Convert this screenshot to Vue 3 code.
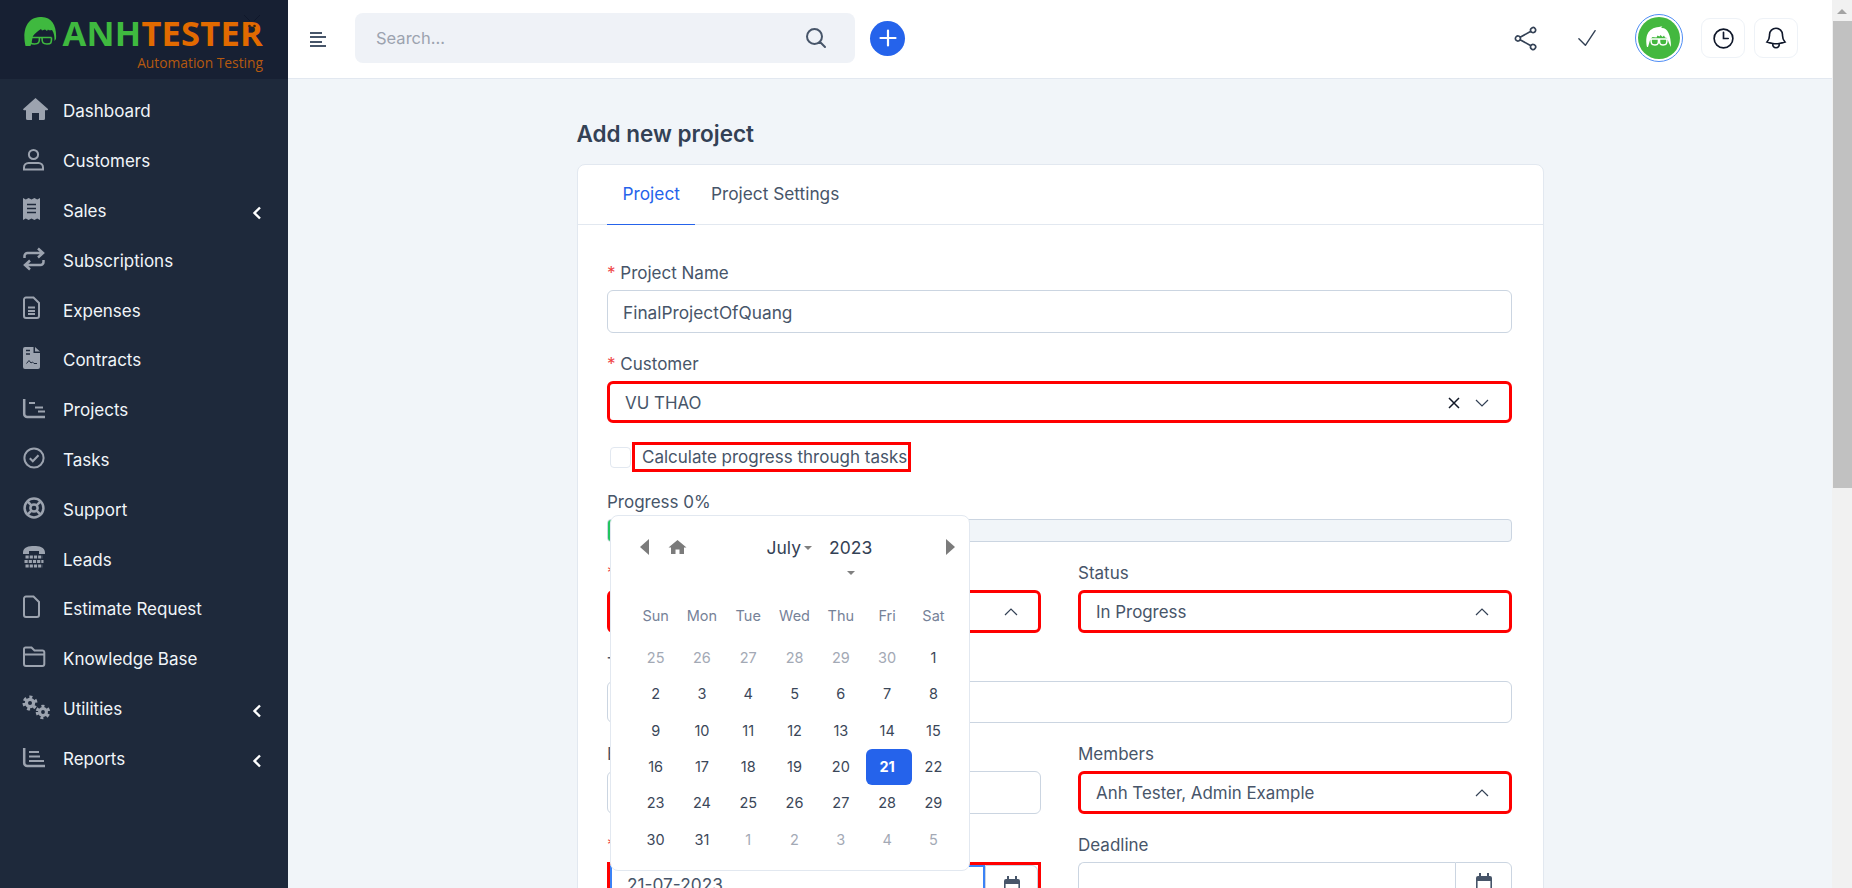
<script setup>
const circle = (cx, cy, r) => `M${cx - r} ${cy}a${r} ${r} 0 1 0 ${r * 2} 0a${r} ${r} 0 1 0 ${-r * 2} 0z`;

const axis = 'M1.2 3V18a3 3 0 0 0 3 3H22';

const menu = [
  { label: 'Dashboard', icon: [['fill', 'M12.5 1 25 12q.5 1-.8 1.2H22v8.3q0 1.5-1.5 1.5H16v-7H9v7H4.5Q3 23 3 21.5v-8.3H1Q-.3 13 .2 12z']] },
  { label: 'Customers', icon: [['line', circle(10.5, 7.5, 4.6)], ['line', 'M1 22.5v-2a4.5 4.5 0 0 1 4.5-4.5h10a4.5 4.5 0 0 1 4.5 4.5v2z']] },
  {
    label: 'Sales',
    more: true,
    icon: [
      ['fill', 'M0 1l2.8 1.5L5.6 1l2.9 1.5L11.4 1l2.8 1.5L17 1v22l-2.8-1.5-2.8 1.5-2.9-1.5L5.6 23l-2.8-1.5L0 23z'],
      ['cut', 'M4 7.5h9M4 11.5h9M4 15.500h9'],
    ],
  },
  { label: 'Subscriptions', icon: [['wide', 'M1.500 11V9a3 3 0 0 1 3-3H19M15 1.500l5 4.500-5 4.500M20.500 13v2a3 3 0 0 1-3 3H3M7 13.500 2 18l5 4.500']] },
  { label: 'Expenses', icon: [['line', 'M3 1.500h7.500L16 7v13a2 2 0 0 1-2 2H3a2 2 0 0 1-2-2V3.500a2 2 0 0 1 2-2z'], ['mid', 'M5 11.500h7M5 15h7M5 18h7']] },
  {
    label: 'Contracts',
    icon: [
      ['fill', 'M2 1h8.500v6H17v14a2 2 0 0 1-2 2H2a2 2 0 0 1-2-2V3a2 2 0 0 1 2-2zM12 1l5 4.500h-5z'],
      ['cut', 'M3 4.500h4M3 8h4'],
      ['cutThin', 'M3.500 17.500l2.500-3 2 2.500 1.500-1 1.500 1.500h3'],
    ],
  },
  { label: 'Projects', icon: [['wide', axis], ['mid', 'M6 7h6M12 11.500h8M15 15.500h7']] },
  { label: 'Tasks', icon: [['line', circle(11, 12, 9.600)], ['line', 'M6.800 12.200l3 3 5.700-6']] },
  { label: 'Support', icon: [['wide', circle(11, 12, 9.400)], ['wide', circle(11, 12, 3.600)], ['wide', 'M4.200 5.200l4.200 4.200M17.800 5.200l-4.200 4.200M4.200 18.800l4.200-4.200M17.800 18.800l-4.200-4.200']] },
  {
    label: 'Leads',
    icon: [
      ['fill', 'M0 7.500C0 2 6 1 11 1s11 1 11 6.500V9h-6V6H6v3H0z'],
      ['keys', 'M2.500 12h17M1.500 16.500h19M2.500 21h17'],
    ],
  },
  { label: 'Estimate Request', icon: [['line', 'M3 1.500h7.500L16 7v13a2 2 0 0 1-2 2H3a2 2 0 0 1-2-2V3.500a2 2 0 0 1 2-2z']] },
  { label: 'Knowledge Base', icon: [['line', 'M1 8V4a1.500 1.500 0 0 1 1.500-1.500h6l3 3h8A1.800 1.800 0 0 1 21.300 7.300V19a2 2 0 0 1-2 2H3a2 2 0 0 1-2-2zM1 9.500h20.300']] },
  {
    label: 'Utilities',
    more: true,
    icon: [
      ['fill', circle(7, 8, 5.200)],
      ['teeth', circle(7, 8, 6)],
      ['cutFill', circle(7, 8, 2)],
      ['fill', circle(20, 17, 5)],
      ['teeth', circle(20, 17, 5.800)],
      ['cutFill', circle(20, 17, 1.900)],
    ],
  },
  { label: 'Reports', more: true, icon: [['wide', axis], ['mid', 'M6 7h10M6 11.500h11M6 16h15']] },
];

const weekDays = ['Sun', 'Mon', 'Tue', 'Wed', 'Thu', 'Fri', 'Sat'];

const calendarDays = [
  ...[25, 26, 27, 28, 29, 30].map((day) => ({ day, muted: true })),
  ...Array.from({ length: 31 }, (_, i) => ({ day: i + 1, muted: false })),
  ...[1, 2, 3, 4, 5].map((day) => ({ day, muted: true })),
];
</script>

<template>
  <div class="page">
    <aside class="sidebar">
      <div class="logo">
        <svg class="logoFace" width="33" height="31" viewBox="0 0 33 31">
          <path class="hair" d="M1.500 29C-1 19-.5 1 16 0c12-.5 17 9 16 22l-1.500 2c0-5-.5-8-2.500-11-2 .5-3 .5-4-.5l-1 1.500-2-1.500-3 1-1-1.500c-3 2-6 4-8 7-1 3-1 7-2.500 10z" />
          <path class="specs" d="M5.500 20.500h22M6 20.500c0 6 .5 6.500 4.500 6.500s5-1 5-6.500M18 20.500c0 5.500 1 6.500 5 6.500s4.500-.5 4.500-6.500" />
        </svg>
        <div class="logoText">
          <div class="logoName"><span class="anh">ANH</span><span class="tester">TESTER</span></div>
          <div class="logoSub">Automation Testing</div>
        </div>
        <svg class="bug" width="20" height="18" viewBox="0 0 20 18">
          <path d="M2 0l6 6M18 0l-6 6" stroke="#0f172a" stroke-width="1" fill="none" />
          <circle cx="7.500" cy="11" r="1.300" fill="#3d2208" />
          <circle cx="12.500" cy="11" r="1.300" fill="#3d2208" />
        </svg>
      </div>
      <nav class="menu">
        <div v-for="item in menu" :key="item.label" class="menuItem">
          <svg class="menuIcon" width="28" height="24" viewBox="0 0 28 24">
            <path v-for="(part, i) in item.icon" :key="i" :class="part[0]" :d="part[1]" />
          </svg>
          <span class="menuLabel">{{ item.label }}</span>
          <svg v-if="item.more" class="menuMore" width="10" height="14" viewBox="0 0 10 14">
            <path d="M8 1.500 2.500 7 8 12.500" />
          </svg>
        </div>
      </nav>
    </aside>

    <div class="main">
      <header class="topbar">
        <div class="burger"><i></i><i></i><i></i><i></i></div>
        <div class="search">
          <span>Search...</span>
          <svg width="24" height="24" viewBox="0 0 24 24" fill="none" stroke="#475569" stroke-width="2">
            <path d="m21 21-5.197-5.197m0 0A7.5 7.500 0 1 0 5.196 5.196a7.500 7.500 0 0 0 10.607 10.607Z" stroke-linecap="round" />
          </svg>
        </div>
        <div class="addBtn">
          <svg width="24" height="24" viewBox="0 0 24 24" fill="none" stroke="#fff" stroke-width="2.200">
            <path d="M12 4.500v15m7.500-7.500h-15" stroke-linecap="round" />
          </svg>
        </div>
        <div class="topRight">
          <svg class="shareIcon" width="27" height="27" viewBox="0 0 24 24" fill="none" stroke="#334155" stroke-width="1.500">
            <path d="M7.217 10.907a2.250 2.250 0 1 0 0 2.186m0-2.186c.18.324.283.696.283 1.093s-.103.77-.283 1.093m0-2.186 9.566-5.314m-9.566 7.500 9.566 5.314m0 0a2.250 2.250 0 1 0 3.935 2.186 2.250 2.250 0 0 0-3.935-2.186Zm0-12.814a2.250 2.250 0 1 0 3.933-2.185 2.250 2.250 0 0 0-3.933 2.185Z" />
          </svg>
          <svg class="checkIcon" width="26" height="26" viewBox="0 0 24 24" fill="none" stroke="#334155" stroke-width="1.300">
            <path d="m4.500 12.750 6 6 9-13.500" stroke-linecap="round" stroke-linejoin="round" />
          </svg>
          <div class="avatar">
            <svg width="42" height="42" viewBox="0 0 42 42">
              <circle cx="21" cy="21" r="21" fill="#43b83f" />
              <path fill="#fff" d="M9 30C7 20 9 11 21 10c5-1 3 0 2 1 6-1 10 6 10 19-2-3-3-7-4-9l-2-.5-1-2-1.500 1.500-2-2-1 1.500-2-1-1 2-4-.5-2 2c-1 2-1.500 5-2.500 8z" />
              <path fill="none" stroke="#fff" stroke-width="1.500" d="M12 22h18M13 22c0 5 .5 6 4 6s3.500-2 3.500-6M21.500 22c0 4 0 6 3.500 6s4-1 4-6" />
            </svg>
          </div>
          <div class="roundBtn clockBtn">
            <svg width="25" height="25" viewBox="0 0 24 24" fill="none" stroke="#0f172a" stroke-width="1.600">
              <path d="M12 6v6h4.500m4.500 0a9 9 0 1 1-18 0 9 9 0 0 1 18 0Z" stroke-linecap="round" />
            </svg>
          </div>
          <div class="roundBtn">
            <svg width="26" height="26" viewBox="0 0 24 24" fill="none" stroke="#0f172a" stroke-width="1.500">
              <path d="M14.857 17.082a23.848 23.848 0 0 0 5.454-1.310A8.967 8.967 0 0 1 18 9.750V9A6 6 0 0 0 6 9v.75a8.967 8.967 0 0 1-2.312 6.022c1.733.64 3.560 1.085 5.455 1.310m5.714 0a24.255 24.255 0 0 1-5.714 0m5.714 0a3 3 0 1 1-5.714 0" />
            </svg>
          </div>
        </div>
      </header>

      <main class="content">
        <div class="wrap">
          <h1 class="title">Add new project</h1>
          <section class="card">
            <div class="tabs">
              <div class="tab active">Project</div>
              <div class="tab">Project Settings</div>
            </div>
            <form class="form">
              <div class="field">
                <label><em>*</em> Project Name</label>
                <div class="input">FinalProjectOfQuang</div>
              </div>
              <div class="field tight">
                <label><em>*</em> Customer</label>
                <div class="select marked">
                  <span>VU THAO</span>
                  <svg class="clear" width="12" height="12" viewBox="0 0 12 12"><path d="M1 1l10 10M11 1 1 11" /></svg>
                  <svg class="chev" width="14" height="8" viewBox="0 0 14 8"><path d="M1 1l6 6 6-6" /></svg>
                </div>
              </div>
              <div class="checkRow">
                <div class="checkbox"></div>
                <div class="checkLabel">Calculate progress through tasks</div>
              </div>
              <div class="field">
                <label>Progress 0%</label>
                <div class="progress"><div class="progressFill"></div></div>
              </div>
              <div class="grid">
                <div class="field">
                  <label><em>*</em> Billing Type</label>
                  <div class="select marked">
                    <span></span>
                    <svg class="chev" width="14" height="8" viewBox="0 0 14 8"><path d="M1 7l6-6 6 6" /></svg>
                  </div>
                </div>
                <div class="field">
                  <label>Status</label>
                  <div class="select marked">
                    <span>In Progress</span>
                    <svg class="chev" width="14" height="8" viewBox="0 0 14 8"><path d="M1 7l6-6 6 6" /></svg>
                  </div>
                </div>
                <div class="field span2">
                  <label>Total Rate</label>
                  <div class="input"></div>
                </div>
                <div class="field">
                  <label>Estimated Hours</label>
                  <div class="input"></div>
                </div>
                <div class="field">
                  <label>Members</label>
                  <div class="select marked">
                    <span>Anh Tester, Admin Example</span>
                    <svg class="chev" width="14" height="8" viewBox="0 0 14 8"><path d="M1 7l6-6 6 6" /></svg>
                  </div>
                </div>
                <div class="field">
                  <label><em>*</em> Start Date</label>
                  <div class="dateField marked">
                    <div class="dateInput focused">21-07-2023</div>
                    <div class="dateAddon">
                      <svg width="18" height="20" viewBox="0 0 18 20"><path d="M1 5a2 2 0 0 1 2-2h12a2 2 0 0 1 2 2v3H1zM4 0h2v4H4zM12 0h2v4h-2z" fill="#475569" /><path d="M1.800 7v10a1.500 1.500 0 0 0 1.500 1.500h11.400a1.500 1.500 0 0 0 1.500-1.500V7" fill="none" stroke="#475569" stroke-width="1.600" /></svg>
                    </div>
                    <div class="picker">
                      <div class="pickerHead">
                        <i class="arrowLeft"></i>
                        <svg class="pickerHome" width="19" height="16" viewBox="0 0 18 16"><path fill="#7b7b7b" d="M9 1 18 8.500h-2.500V15H11v-4.500H7V15H2.500V8.500H0z" /></svg>
                        <span class="pickerMonth">July</span><i class="caret monthCaret"></i>
                        <span class="pickerYear">2023</span>
                        <i class="arrowRight"></i>
                      </div>
                      <div class="yearCaretRow"><i class="caret"></i></div>
                      <div class="pickerGrid pickerDows">
                        <div v-for="d in weekDays" :key="d">{{ d }}</div>
                      </div>
                      <div class="pickerGrid">
                        <div
                          v-for="(cell, i) in calendarDays"
                          :key="i"
                          class="dayCell"
                          :class="{ muted: cell.muted, selected: !cell.muted && cell.day === 21 }"
                        >
                          {{ cell.day }}
                        </div>
                      </div>
                    </div>
                  </div>
                </div>
                <div class="field">
                  <label>Deadline</label>
                  <div class="dateField">
                    <div class="dateInput"></div>
                    <div class="dateAddon">
                      <svg width="18" height="20" viewBox="0 0 18 20"><path d="M1 5a2 2 0 0 1 2-2h12a2 2 0 0 1 2 2v3H1zM4 0h2v4H4zM12 0h2v4h-2z" fill="#475569" /><path d="M1.800 7v10a1.500 1.500 0 0 0 1.500 1.500h11.400a1.500 1.500 0 0 0 1.500-1.500V7" fill="none" stroke="#475569" stroke-width="1.600" /></svg>
                    </div>
                  </div>
                </div>
              </div>
            </form>
          </section>
        </div>
      </main>
    </div>

    <div class="scrollbar">
      <i class="scrollArrow"></i>
      <div class="scrollThumb"></div>
    </div>
  </div>
</template>

<style>
html, body {
  margin: 0;
  height: 100%;
  overflow: hidden;
}
</style>

<style scoped>
.page {
  display: flex;
  height: 888px;
  overflow: hidden;
  background: #f1f5f9;
  color: #475569;
  font-family: Inter, "Liberation Sans", sans-serif;
  font-size: 17px;
}

.sidebar {
  width: 288px;
  flex: none;
  background: #1e293b;
  display: flex;
  flex-direction: column;
}

.logo {
  height: 79px;
  flex: none;
  background: #172033;
  display: flex;
  box-sizing: border-box;
  padding: 17px 0 0 24px;
  position: relative;
}

.logoFace {
  flex: none;
}

.hair {
  fill: #3fb93f;
}

.specs {
  fill: none;
  stroke: #3fb93f;
  stroke-width: 1.600;
}

.logoText {
  margin-left: 4px;
  margin-top: -3px;
  width: 202px;
  text-align: right;
}

.logoName {
  font-family: "Open Sans", sans-serif;
  font-weight: 700;
  font-size: 34.500px;
  line-height: 38px;
  letter-spacing: 0.200px;
  white-space: nowrap;
}

.anh {
  color: #3fb93f;
}

.tester {
  color: #e26a00;
}

.logoSub {
  color: #b5590f;
  font-size: 13.800px;
  font-family: "Open Sans", sans-serif;
  line-height: 20px;
  margin-top: 1px;
}

.bug {
  position: absolute;
  left: 242px;
  top: 15px;
}

.menu {
  padding-top: 7.500px;
}

.menuItem {
  height: 49.800px;
  display: flex;
  align-items: center;
  padding-left: 23px;
  position: relative;
}

.menuIcon {
  flex: none;
  margin-top: -4.500px;
  overflow: visible;
}

.menuLabel {
  margin-left: 12px;
  color: #f1f5f9;
  font-size: 17px;
}

.menuMore {
  position: absolute;
  left: 252px;
  top: 20px;
  fill: none;
  stroke: #fff;
  stroke-width: 2.400;
}

.fill {
  fill: #9ca3af;
}

.line {
  fill: none;
  stroke: #9ca3af;
  stroke-width: 2;
}

.wide {
  fill: none;
  stroke: #9ca3af;
  stroke-width: 2.500;
}

.mid {
  fill: none;
  stroke: #9ca3af;
  stroke-width: 2;
}

.cut {
  fill: none;
  stroke: #1e293b;
  stroke-width: 1.600;
}

.cutThin {
  fill: none;
  stroke: #1e293b;
  stroke-width: 1;
}

.cutFill {
  fill: #1e293b;
}

.keys {
  fill: none;
  stroke: #9ca3af;
  stroke-width: 3;
  stroke-dasharray: 3.200 1;
}

.teeth {
  fill: none;
  stroke: #9ca3af;
  stroke-width: 3;
  stroke-dasharray: 3 3.300;
}

.main {
  flex: 1;
  min-width: 0;
  display: flex;
  flex-direction: column;
}

.topbar {
  height: 79px;
  flex: none;
  box-sizing: border-box;
  background: #fff;
  border-bottom: 1px solid #e2e8f0;
  display: flex;
  align-items: center;
  padding: 0 0 2px 22px;
}

.burger {
  width: 16px;
  display: flex;
  flex-direction: column;
  gap: 2.500px;
  margin-top: 3px;
}

.burger i {
  display: block;
  height: 2px;
  background: #475569;
}

.burger i:nth-child(1),
.burger i:nth-child(3) {
  width: 12px;
}

.search {
  width: 500px;
  height: 50px;
  margin-left: 29px;
  background: #eff2f7;
  border-radius: 8px;
  display: flex;
  align-items: center;
  justify-content: space-between;
  box-sizing: border-box;
  padding: 0 27px 0 21px;
  color: #9ca3af;
  font-size: 16.500px;
}

.addBtn {
  width: 35px;
  height: 35px;
  margin-left: 15px;
  border-radius: 50%;
  background: #2563eb;
  display: flex;
  align-items: center;
  justify-content: center;
}

.topRight {
  margin-left: auto;
  display: flex;
  align-items: center;
  padding-right: 34px;
}

.checkIcon {
  margin-left: 35px;
}

.avatar {
  width: 48px;
  height: 48px;
  margin-left: 35px;
  box-sizing: border-box;
  border: 1.500px solid #4f8df5;
  border-radius: 50%;
  display: flex;
  align-items: center;
  justify-content: center;
}

.roundBtn {
  width: 44px;
  height: 40px;
  margin-left: 9px;
  border: 1px solid #eef2f7;
  border-radius: 9px;
  box-sizing: border-box;
  display: flex;
  align-items: center;
  justify-content: center;
}

.clockBtn {
  margin-left: 18px;
}

.content {
  flex: 1;
  min-height: 0;
  overflow: hidden;
}

.wrap {
  width: 967px;
  margin: 0 auto;
}

.title {
  margin: 0;
  padding-top: 40px;
  height: 45px;
  font-size: 22.500px;
  line-height: 30px;
  font-weight: 600;
  color: #334155;
  box-sizing: content-box;
}

.card {
  background: #fff;
  border: 1px solid #e2e8f0;
  border-radius: 8px;
  box-sizing: border-box;
}

.tabs {
  height: 60px;
  box-sizing: border-box;
  display: flex;
  padding-left: 29.500px;
  border-bottom: 1px solid #e2e8f0;
}

.tab {
  padding: 0 15.500px;
  line-height: 58px;
  height: 60px;
  box-sizing: border-box;
  font-size: 17.300px;
}

.tab.active {
  color: #2563eb;
  border-bottom: 1px solid #2563eb;
}

.form {
  padding: 37px 30.500px 20px 29.500px;
}

.field {
  margin-bottom: 20px;
}

.field.tight {
  margin-bottom: 19px;
}

.field label {
  display: block;
  height: 22px;
  line-height: 22px;
  margin-bottom: 6px;
  font-size: 17px;
}

.field em {
  font-style: normal;
  color: #ef4444;
}

.input,
.select {
  height: 42.500px;
  box-sizing: border-box;
  border: 1px solid #cbd5e1;
  border-radius: 6px;
  background: #fff;
  padding: 2px 15px 0;
  display: flex;
  align-items: center;
  font-size: 17.300px;
}

.select {
  font-size: 16.900px;
}

.select span {
  flex: 1;
}

.marked {
  border: 3px solid #f00;
}

.clear {
  fill: none;
  stroke: #111827;
  stroke-width: 1.500;
  margin-right: 15px;
}

.chev {
  fill: none;
  stroke: #334155;
  stroke-width: 1.200;
  margin-right: 5px;
}

.checkRow {
  display: flex;
  align-items: center;
  height: 30px;
  margin-bottom: 19px;
}

.checkbox {
  width: 21px;
  height: 21px;
  margin-left: 3px;
  box-sizing: border-box;
  border: 1px solid #e2e8f0;
  border-radius: 4px;
}

.checkLabel {
  margin-left: 1px;
  height: 30px;
  box-sizing: border-box;
  border: 3px solid #f00;
  line-height: 24px;
  padding: 0 1px 0 7px;
  white-space: nowrap;
  font-size: 17px;
}

.progress {
  height: 23px;
  box-sizing: border-box;
  background: #f1f5f9;
  border: 1px solid #cbd5e1;
  border-radius: 4px;
  overflow: hidden;
}

.progressFill {
  width: 5px;
  height: 100%;
  background: #22c55e;
}

.grid {
  display: grid;
  grid-template-columns: 434px 434px;
  column-gap: 37px;
}

.span2 {
  grid-column: span 2;
}

.dateField {
  height: 42.500px;
  box-sizing: content-box;
  display: flex;
  position: relative;
  border-radius: 6px;
}

.dateField.marked {
  border-radius: 0;
}

.dateInput {
  flex: 1;
  box-sizing: border-box;
  border: 1px solid #cbd5e1;
  border-right: 0;
  border-radius: 6px 0 0 6px;
  padding: 0 15px 2px;
  display: flex;
  align-items: center;
  font-size: 17.300px;
}

.dateInput.focused {
  border: 2px solid #3b82f6;
  border-radius: 0;
}

.dateAddon {
  width: 57px;
  flex: none;
  box-sizing: border-box;
  border: 1px solid #cbd5e1;
  border-radius: 0 6px 6px 0;
  display: flex;
  align-items: center;
  justify-content: center;
}

.marked .dateAddon {
  width: 53px;
}

.picker {
  position: absolute;
  z-index: 5;
  left: 0;
  top: -349.500px;
  width: 360px;
  box-sizing: border-box;
  background: #fff;
  border: 1px solid #e2e8f0;
  border-radius: 8px;
  padding: 19px 11px 11.800px 21.500px;
}

.pickerHead {
  height: 24px;
  display: flex;
  align-items: center;
  padding: 0 3px 0 7px;
  font-size: 17.500px;
  color: #334155;
}

.arrowLeft,
.arrowRight {
  width: 0;
  height: 0;
  border-top: 8px solid transparent;
  border-bottom: 8px solid transparent;
}

.arrowLeft {
  border-right: 9px solid #7b7b7b;
}

.arrowRight {
  border-left: 9px solid #7b7b7b;
  margin-left: auto;
}

.pickerHome {
  margin-left: 19px;
}

.pickerMonth {
  margin-left: 80px;
}

.caret {
  display: block;
  width: 0;
  height: 0;
  border-left: 4px solid transparent;
  border-right: 4px solid transparent;
  border-top: 4px solid #808080;
}

.monthCaret {
  margin-left: 3px;
  margin-top: 1px;
}

.pickerYear {
  margin-left: 17px;
}

.yearCaretRow {
  height: 28px;
  display: flex;
  align-items: center;
  padding-left: 214px;
}

.pickerGrid {
  display: grid;
  grid-template-columns: repeat(7, 46.300px);
  font-size: 14.500px;
  text-align: center;
}

.pickerDows {
  height: 38px;
  line-height: 38px;
  margin: 10px 0 4.800px;
  color: #768298;
}

.dayCell {
  height: 36.400px;
  line-height: 36.400px;
  color: #3b4759;
}

.dayCell.muted {
  color: #a3a9b5;
}

.dayCell.selected {
  background: #2563eb;
  color: #fff;
  font-weight: 700;
  border-radius: 6px;
  box-sizing: border-box;
  margin: 0 -2px 0 2px;
  padding-right: 4px;
}

.scrollbar {
  width: 20px;
  flex: none;
  background: #f1f1f1;
  display: flex;
  flex-direction: column;
  align-items: center;
}

.scrollArrow {
  display: block;
  width: 0;
  height: 0;
  margin: 9px 0 7px;
  border-left: 5px solid transparent;
  border-right: 5px solid transparent;
  border-bottom: 5px solid #a3a3a3;
}

.scrollThumb {
  width: 19px;
  margin-left: 1px;
  height: 467px;
  background: #c1c1c1;
}
</style>
